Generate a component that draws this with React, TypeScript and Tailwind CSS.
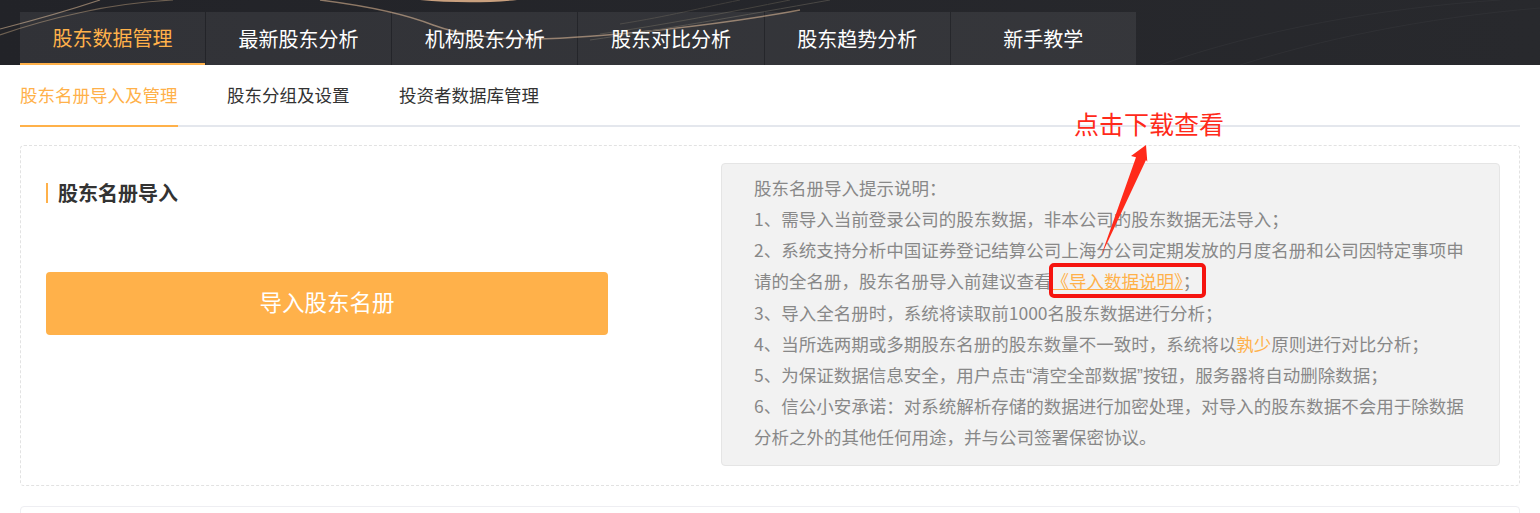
const lines = [
  "股东名册导入提示说明：",
  "1、需导入当前登录公司的股东数据，非本公司的股东数据无法导入；",
  "2、系统支持分析中国证券登记结算公司上海分公司定期发放的月度名册和公司因特定事项申",
];

const tabs = ["股东数据管理", "最新股东分析", "机构股东分析", "股东对比分析", "股东趋势分析", "新手教学"];
const font = { fontFamily: '"Noto Sans CJK SC", sans-serif' };

function HeaderArt() {
  return (
    <svg className="absolute inset-0 h-full w-full" viewBox="0 0 1540 65" fill="none">
      <path d="M0 29C35 20 70 10 100 0" stroke="#8a7765" strokeWidth="1.2" />
      <path d="M0 35C28 25 55 18 83 12C110 6 140 2 173 0" stroke="#6e6052" strokeWidth="1.2" />
      <path d="M320 0C360 5 400 12 433 25C460 35 500 40 533 39C600 38 720 25 800 10" stroke="#8f7966" strokeWidth="1.4" />
      <path d="M420 0C450 3 490 3 517 0Z" fill="#c9a07e" />
      <path d="M590 40C660 30 740 16 830 0" stroke="#4a4845" strokeWidth="1" />
      <path d="M600 34C670 24 730 12 790 0" stroke="#45433f" strokeWidth="1" />
      <path d="M620 24C670 16 700 8 740 0" stroke="#403e3c" strokeWidth="1" />
      <path d="M1240 65C1320 40 1420 18 1540 8" stroke="#2f3034" strokeWidth="1" />
      <path d="M1160 65C1260 30 1380 8 1500 0" stroke="#2f3034" strokeWidth="1" />
    </svg>
  );
}

export default function App() {
  return (
    <div className="relative h-[513px] w-[1540px] overflow-hidden bg-white" style={font}>
      <div className="relative h-[65px] bg-linear-to-r from-[#222328] to-[#28292d] pl-5 pt-3">
        <HeaderArt />
        <div className="relative flex h-[53px]">
          {tabs.map((t, i) => (
            <div
              key={t}
              className={
                i === 0
                  ? "flex h-full w-[185px] items-center justify-center border-b-2 border-[#ffb14a] bg-white/7 text-[20px] text-[#ffb14a]"
                  : "ml-px flex h-full w-[185.2px] items-center justify-center bg-white/7 text-[20px] text-white"
              }
            >
              {t}
            </div>
          ))}
        </div>
      </div>

      <div className="mx-5 flex h-[62px] gap-[49.5px] border-b-2 border-[#e4e7ed] text-[17.5px]">
        <div className="-mb-[2px] flex items-center border-b-2 border-[#ffb14a] text-[#ffb14a]">股东名册导入及管理</div>
        <div className="flex items-center text-[#333]">股东分组及设置</div>
        <div className="flex items-center text-[#333]">投资者数据库管理</div>
      </div>

      <div className="mx-5 mt-[18px] flex h-[341px] justify-between rounded border border-dashed border-[#e2e2e2] pl-[25px] pr-[19px] pt-[17px]">
        <div className="w-[562px] pt-5">
          <div className="flex h-5 items-center border-l-2 border-[#ffb14a] pl-[10px] text-[20px] font-bold text-[#333]">股东名册导入</div>
          <div className="mt-[69px] flex h-[63px] items-center justify-center rounded bg-[#ffb14a] pb-[3px] text-[22.5px] text-white">导入股东名册</div>
        </div>
        <div className="h-[303px] w-[779px] rounded border border-[#e5e5e5] bg-[#f2f2f2] px-8 py-2 text-[17.5px] leading-[31.15px] text-[#888]">
          {lines.map((l) => (
            <div key={l} className="whitespace-nowrap">{l}</div>
          ))}
          <div className="whitespace-nowrap">
            请的全名册，股东名册导入前建议查看<span className="text-[#ffb14a] underline">《导入数据说明》</span>；
          </div>
          <div className="whitespace-nowrap">3、导入全名册时，系统将读取前1000名股东数据进行分析；</div>
          <div className="whitespace-nowrap">
            4、当所选两期或多期股东名册的股东数量不一致时，系统将以<span className="text-[#ffb14a]">孰少</span>原则进行对比分析；
          </div>
          <div className="h-[31.15px] whitespace-nowrap">
            5、为保证数据信息安全，用户点击<span className="font-['Liberation_Sans'] leading-none">“</span>清空全部数据<span className="font-['Liberation_Sans'] leading-none">”</span>按钮，服务器将自动删除数据；
          </div>
          <div className="whitespace-nowrap">6、信公小安承诺：对系统解析存储的数据进行加密处理，对导入的股东数据不会用于除数据</div>
          <div className="whitespace-nowrap">分析之外的其他任何用途，并与公司签署保密协议。</div>
        </div>
      </div>

      <div className="mx-5 mt-5 h-[40px] rounded border border-[#eeeef2]" />

      {/* annotation on top of the screenshot */}
      <div className="absolute left-[1074px] top-[105px] text-[25px] leading-9 text-[#ff2a1a]">点击下载查看</div>
      <svg className="absolute left-[1090px] top-[140px]" width="70" height="125" viewBox="0 0 70 125">
        <path d="M11 116L46 17.3L41 16L56 5L57.3 21.7L56 20Z" fill="#ff2a1a" />
      </svg>
      <div className="absolute left-[1049px] top-[263px] h-[35px] w-[157px] rounded-[5px] border-4 border-[#f5140f]" />
    </div>
  );
}
